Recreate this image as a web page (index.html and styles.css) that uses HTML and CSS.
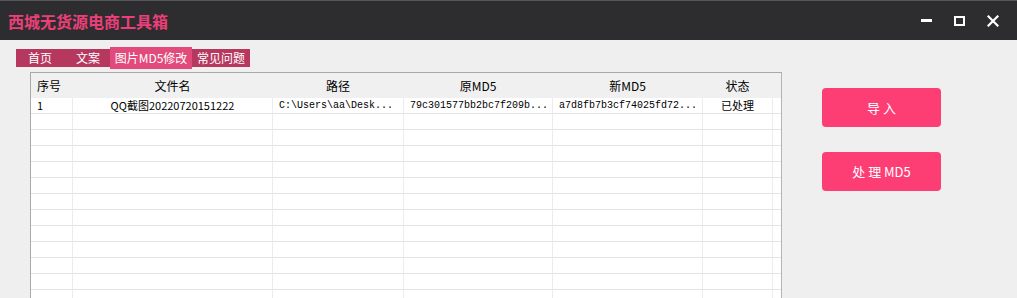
FILE: index.html
```html
<!DOCTYPE html>
<html lang="zh">
<head>
<meta charset="utf-8">
<title>西城无货源电商工具箱</title>
<link rel="stylesheet" href="styles.css">
</head>
<body>
<div class="titlebar">
  <div class="app-title">西城无货源电商工具箱</div>
  <div class="win-ctrls">
    <span class="ctrl ctrl-min"></span>
    <span class="ctrl ctrl-max"></span>
    <svg class="ctrl-close" width="12" height="12" viewBox="0 0 12 12"><path d="M1.5 1.5L10.5 10.5M10.5 1.5L1.5 10.5" stroke="#fff" stroke-width="2.2" stroke-linecap="square"/></svg>
  </div>
</div>
<div class="content">
  <div class="left">
    <div class="tabs">
      <span class="tab tab-home">首页</span>
      <span class="tab tab-copy">文案</span>
      <span class="tab tab-active">图片MD5修改</span>
      <span class="tab tab-faq">常见问题</span>
    </div>
    <div class="grid">
      <div class="row head">
        <div class="c c-left">序号</div><div class="c">文件名</div><div class="c">路径</div><div class="c">原MD5</div><div class="c">新MD5</div><div class="c">状态</div><div class="c fill"></div>
      </div>
      <div class="row">
        <div class="c c-left">1</div><div class="c">QQ截图20220720151222</div><div class="c mono">C:\Users\aa\Desk...</div><div class="c mono">79c301577bb2bc7f209b...</div><div class="c mono">a7d8fb7b3cf74025fd72...</div><div class="c">已处理</div><div class="c fill"></div>
      </div>
      <div class="row"><div class="c"></div><div class="c"></div><div class="c"></div><div class="c"></div><div class="c"></div><div class="c"></div><div class="c fill"></div></div>
      <div class="row"><div class="c"></div><div class="c"></div><div class="c"></div><div class="c"></div><div class="c"></div><div class="c"></div><div class="c fill"></div></div>
      <div class="row"><div class="c"></div><div class="c"></div><div class="c"></div><div class="c"></div><div class="c"></div><div class="c"></div><div class="c fill"></div></div>
      <div class="row"><div class="c"></div><div class="c"></div><div class="c"></div><div class="c"></div><div class="c"></div><div class="c"></div><div class="c fill"></div></div>
      <div class="row"><div class="c"></div><div class="c"></div><div class="c"></div><div class="c"></div><div class="c"></div><div class="c"></div><div class="c fill"></div></div>
      <div class="row"><div class="c"></div><div class="c"></div><div class="c"></div><div class="c"></div><div class="c"></div><div class="c"></div><div class="c fill"></div></div>
      <div class="row"><div class="c"></div><div class="c"></div><div class="c"></div><div class="c"></div><div class="c"></div><div class="c"></div><div class="c fill"></div></div>
      <div class="row"><div class="c"></div><div class="c"></div><div class="c"></div><div class="c"></div><div class="c"></div><div class="c"></div><div class="c fill"></div></div>
      <div class="row"><div class="c"></div><div class="c"></div><div class="c"></div><div class="c"></div><div class="c"></div><div class="c"></div><div class="c fill"></div></div>
      <div class="row"><div class="c"></div><div class="c"></div><div class="c"></div><div class="c"></div><div class="c"></div><div class="c"></div><div class="c fill"></div></div>
      <div class="row"><div class="c"></div><div class="c"></div><div class="c"></div><div class="c"></div><div class="c"></div><div class="c"></div><div class="c fill"></div></div>
      <div class="row"><div class="c"></div><div class="c"></div><div class="c"></div><div class="c"></div><div class="c"></div><div class="c"></div><div class="c fill"></div></div>
    </div>
  </div>
  <div class="right">
    <button class="btn">导 入</button>
    <button class="btn">处 理 MD5</button>
  </div>
</div>
</body>
</html>
```

FILE: styles.css
```css
html, body {
  margin: 0;
  padding: 0;
}
body {
  width: 1017px;
  height: 298px;
  overflow: hidden;
  background: #efefef;
  font-family: "Noto Sans CJK SC", "Noto Sans", sans-serif;
  font-size: 12px;
  color: #000;
}
.titlebar {
  height: 40px;
  background: #2d2d30;
  border-top: 1px solid #56565a;
  box-sizing: border-box;
  display: flex;
  align-items: center;
  justify-content: space-between;
}
.app-title {
  margin-left: 8px;
  color: #ea3f78;
  font-size: 16px;
  font-weight: bold;
  letter-spacing: 0;
  line-height: 20px;
}
.win-ctrls {
  display: flex;
  align-items: center;
  margin-right: 18px;
  gap: 0;
}
.ctrl-min {
  width: 11px;
  height: 3px;
  background: #fff;
  margin-right: 22px;
  margin-top: 0;
}
.ctrl-max {
  width: 7px;
  height: 6px;
  border: 2px solid #fff;
  border-top-width: 2px;
  margin-right: 22px;
}
.ctrl-close {
  display: block;
}
.content {
  display: flex;
  padding: 9px 0 0 16px;
}
.left {
  width: 766px;
}
.tabs {
  display: flex;
  align-items: center;
  height: 18px;
  background: #b7385f;
  width: 234px;
  color: #fff;
  font-size: 12px;
}
.tab {
  display: flex;
  align-items: center;
  justify-content: center;
  height: 18px;
  line-height: 18px;
  white-space: nowrap;
}
.tab-home { width: 56px; justify-content: flex-start; padding-left: 12px; box-sizing: border-box; }
.tab-copy { width: 38px; justify-content: flex-start; padding-left: 4px; box-sizing: border-box; }
.tab-active {
  width: 82px;
  height: 22px;
  background: #e24a7b;
}
.tab-faq { width: 58px; }
.grid {
  margin: 5px 0 0 14px;
  width: 752px;
  border: 1px solid #a9a9a9;
  border-right-color: #b4b4b4;
  background: #fff;
  box-sizing: border-box;
}
.row {
  display: grid;
  grid-template-columns: 42px 200px 131px 149px 150px 70px 1fr;
  height: 16px;
}
.row.head {
  height: 25px;
  background: #f0f0f0;
}
.c {
  border-right: 1px solid #ececec;
  border-bottom: 1px solid #e4e4e4;
  display: flex;
  align-items: center;
  justify-content: center;
  white-space: nowrap;
  overflow: hidden;
  line-height: 15px;
  font-size: 11px;
}
.head .c {
  font-size: 12px;
  border-bottom-color: #f0f0f0;
  border-right-color: #f0f0f0;
}
.c-left {
  justify-content: flex-start;
  padding-left: 6px;
}
.mono {
  justify-content: flex-start;
  padding-left: 6px;
  font-family: "Liberation Mono", "DejaVu Sans Mono", monospace;
  font-size: 10px;
}
.fill {
  border-right: none;
}
.right {
  display: flex;
  flex-direction: column;
  gap: 25px;
  margin-left: 40px;
  padding-top: 39px;
}
.btn {
  width: 119px;
  height: 39px;
  border: none;
  border-radius: 4px;
  background: #fd3e75;
  color: #fff;
  font-family: "Noto Sans CJK SC", "Noto Sans", sans-serif;
  font-size: 13px;
  padding: 0;
}
```
